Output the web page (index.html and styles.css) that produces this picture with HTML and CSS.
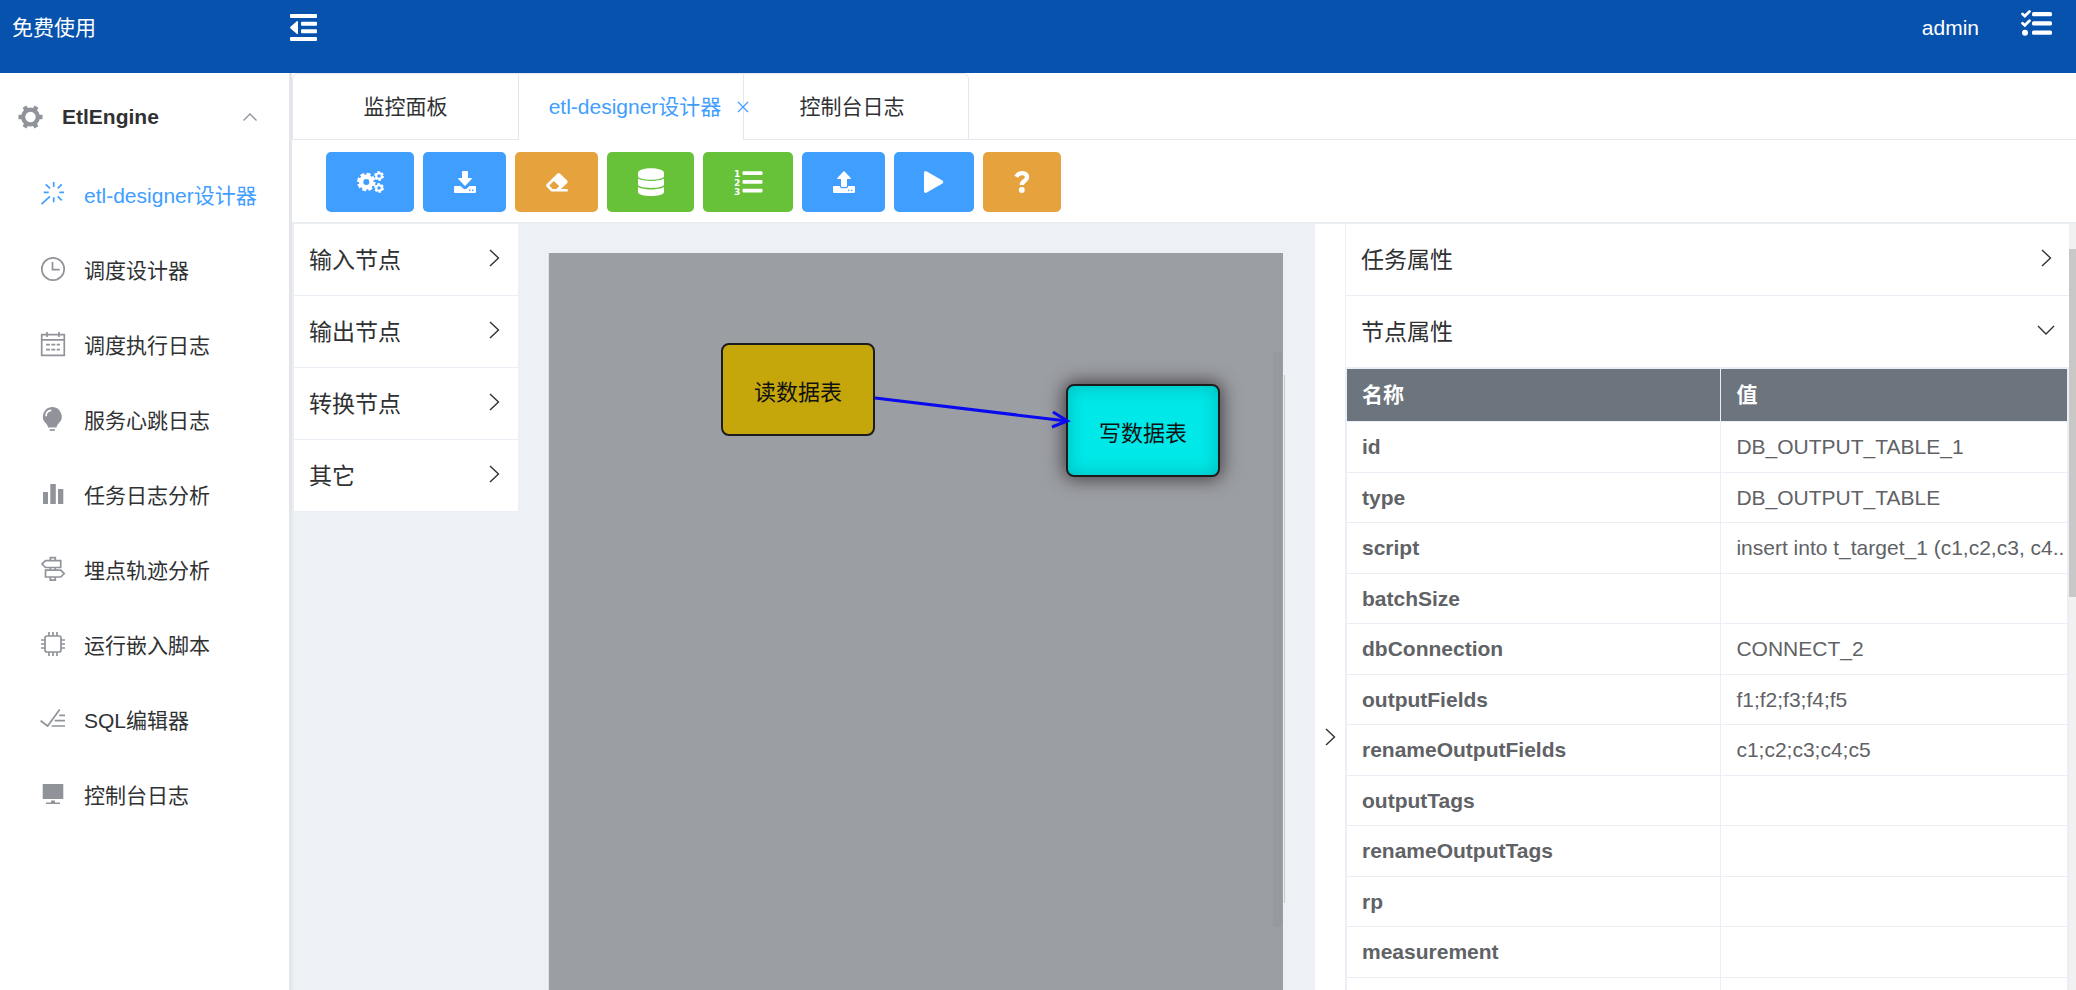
FILE: index.html
```html
<!DOCTYPE html>
<html lang="zh-CN">
<head>
<meta charset="utf-8">
<title>EtlEngine</title>
<link rel="stylesheet" href="styles.css">
</head>
<body>
<div class="app">
  <header class="topbar">
    <span class="brand">免费使用</span>
    <button class="icon-btn" type="button" aria-label="折叠菜单">
      <svg class="fold-icon" viewBox="0 0 27 27" fill="#fff"><rect width="27" height="4" rx="1"/><rect x="11" y="7.7" width="16" height="4" rx="1"/><rect x="11" y="15.3" width="16" height="4" rx="1"/><rect y="23" width="27" height="4" rx="1"/><path d="M8 7.5v12.5L7 20 .2 14.200V13L7 7z"/></svg>
    </button>
    <span class="user">admin</span>
    <button class="icon-btn task-btn" type="button" aria-label="任务列表">
      <svg class="task-icon" viewBox="0 0 31 26"><g fill="#fff"><rect x="11" y="2" width="20" height="4.200" rx="1.500"/><rect x="11" y="11.300" width="20" height="4.200" rx="1.500"/><rect x="11" y="20.600" width="20" height="4.200" rx="1.500"/><circle cx="4" cy="22.700" r="3"/></g><path d="M1.500 4l2.300 2L8.500 1.500M1.500 13.300l2.300 2 4.700-4.500" fill="none" stroke="#fff" stroke-width="2.800" stroke-linecap="round"/></svg>
    </button>
  </header>

  <div class="body">
    <nav class="sidebar">
      <button class="menu-title" type="button">
        <svg class="gear-icon" viewBox="0 0 26 24" fill="none" stroke="#909399"><circle cx="13" cy="12" r="7.600" stroke-width="4.400"/><path d="M5 12H.5M21 12h4.500M9 5.100L6.800 1.200M17 5.100l2.200-3.900M9 18.900l-2.200 3.900M17 18.900l2.200 3.900" stroke-width="4.600"/></svg>
        <span>EtlEngine</span>
        <svg class="fold-arrow" viewBox="0 0 14 8" fill="none" stroke="#909399" stroke-width="1.300"><path d="M.5 7.500L7 1l6.500 6.500"/></svg>
      </button>
      <a class="menu-item active" href="#"><svg viewBox="0 0 24 24"><path d="M12.700 0v5M12.700 15.300v5M2.700 10.300h5M18.300 10.300H23M20.700 2.300l-4 4M16.700 14.300l4 4M4.700 2.300l4.300 4M.5 22.200L9 14.300"/></svg>etl-designer设计器</a>
      <a class="menu-item" href="#"><svg viewBox="0 0 24 24"><circle cx="12" cy="12" r="11.200"/><path d="M11.500 5v7.700h7.200"/></svg>调度设计器</a>
      <a class="menu-item" href="#"><svg viewBox="0 0 24 24"><path d="M.7 2.700h22.600v20.600H.7zM.7 7.800h22.600M6 0v5M18 0v5M5 12.700h4M10.300 12.700h4M15.700 12.700H19M5 17.700h4M10.300 17.700h4M15.700 17.700H19"/></svg>调度执行日志</a>
      <a class="menu-item" href="#"><svg viewBox="0 0 24 24"><path class="solid" d="M11.300 0a9.500 9.500 0 0 1 6.500 16.300c-1.300 1.200-1.800 2.300-2.300 4.200h-8.400c-.5-1.900-1-3-2.300-4.200A9.500 9.500 0 0 1 11.300 0z"/><path d="M8.700 23h5.200"/><path class="shine" d="M5 9.300c0-3.500 2-5.800 5.300-6"/></svg>服务心跳日志</a>
      <a class="menu-item" href="#"><svg viewBox="0 0 24 24"><path class="solid" d="M2 10h5v12H2zM9.300 2h5.500v20H9.300zM17 7h5.300v15H17z"/></svg>任务日志分析</a>
      <a class="menu-item" href="#"><svg viewBox="0 0 24 24"><path d="M9.300 3.700v-3h5v3M4.500 3.700h15.200v6.800H4.500L1 7.100zM9.300 10.500v3M14.300 10.500v3M4.500 13.200h15.300l3.400 3.400-3.400 3.400H4.500zM9.300 20v3.200h5V20"/></svg>埋点轨迹分析</a>
      <a class="menu-item" href="#"><svg viewBox="0 0 24 24"><rect x="4" y="4" width="16" height="16" rx="2"/><path d="M8 0v4M12 0v4M16 0v4M8 20v4M12 20v4M16 20v4M0 8h4M0 12h4M0 16h4M20 8h4M20 12h4M20 16h4"/></svg>运行嵌入脚本</a>
      <a class="menu-item" href="#"><svg viewBox="0 0 24 24"><path d="M-.4 13.800l7 5.200L18.700 2.500M18.300 8.300H24M13.700 13.700H24M10.700 19H24"/></svg>SQL编辑器</a>
      <a class="menu-item" href="#"><svg viewBox="0 0 24 24"><path class="solid" d="M1.700 2h20.600v15H1.700zM10 18.500h4v2h5v1.500H5v-1.500h5z"/></svg>控制台日志</a>
    </nav>

    <main class="content">
      <div class="tabs" role="tablist">
        <button class="tab" type="button" role="tab">监控面板</button>
        <button class="tab current" type="button" role="tab" aria-selected="true">etl-designer设计器</button>
        <button class="tab" type="button" role="tab">控制台日志</button>
        <svg class="tab-close" viewBox="0 0 12 12" fill="none" stroke="#409eff" stroke-width="1.200"><path d="M1 1l10 10M11 1L1 11"/></svg>
      </div>

      <div class="toolbar">
        <button class="tool w88 blue" type="button" aria-label="设置"><svg width="27" height="22" viewBox="0 0 27 22" fill="none" stroke="#fff"><circle cx="9.300" cy="11" r="5.200" stroke-width="4.400"/><circle cx="9.300" cy="11" r="7.900" stroke-width="2.800" stroke-dasharray="4 2.200"/><circle cx="22" cy="5" r="2.800" stroke-width="2"/><circle cx="22" cy="5" r="4" stroke-width="1.800" stroke-dasharray="2.400 1.790"/><circle cx="22" cy="17" r="2.800" stroke-width="2"/><circle cx="22" cy="17" r="4" stroke-width="1.800" stroke-dasharray="2.400 1.790"/></svg></button>
        <button class="tool w83 blue" type="button" aria-label="下载"><svg width="22" height="22" viewBox="0 0 22 22" fill="#fff"><path d="M9 0h4q1 0 1 1v6h3.300q1 0 .4.900L11.600 14.400q-.6.600-1.200 0L4.300 7.900Q3.700 7 4.700 7H8V1q0-1 1-1z"/><path fill-rule="evenodd" d="M1 15h5.500l2.700 2.600q1.800 1.500 3.600 0L15.500 15H21q1 0 1 1v5q0 1-1 1H1q-1 0-1-1v-5q0-1 1-1zM15 18.500v1.400h1.400v-1.400zM18 18.500v1.400h1.400v-1.400z"/></svg></button>
        <button class="tool w83 orange" type="button" aria-label="清除"><svg width="22" height="19" viewBox="0 0 22 19" fill="#fff"><path fill-rule="evenodd" d="M11.500.6q1.200-1.200 2.400 0l7.300 7q1.200 1.200 0 2.400L15 15.900h6.700v2.600H6.300q-.8 0-1.400-.6L.6 13.700q-1.100-1.200 0-2.400zM7.800 7.900L3.300 12.400 6.600 15.900H10.500L13.200 13z"/></svg></button>
        <button class="tool w87 green" type="button" aria-label="数据库"><svg width="26" height="28" viewBox="0 0 26 28" fill="#fff"><path d="M0 5C0-1.300 26-1.300 26 5v3c0 5-26 5-26 0z"/><path d="M0 10.500c4 3.300 22 3.300 26 0v6c0 4.500-26 4.500-26 0z"/><path d="M0 19c4 3.300 22 3.300 26 0v5c0 5.300-26 5.300-26 0z"/></svg></button>
        <button class="tool w90 green" type="button" aria-label="编号列表"><svg width="29" height="26" viewBox="0 0 29 26" fill="#fff"><text class="ol-digit" x="0" y="8">1</text><text class="ol-digit" x="0" y="17">2</text><text class="ol-digit" x="0" y="26">3</text><rect x="8.500" y="2.300" width="20" height="3.700" rx="1"/><rect x="8.500" y="11" width="20" height="3.700" rx="1"/><rect x="8.500" y="19.700" width="20" height="3.700" rx="1"/></svg></button>
        <button class="tool w83 blue" type="button" aria-label="上传"><svg width="22" height="22" viewBox="0 0 22 22" fill="#fff"><path d="M9 16q-1 0-1-1V8H4.700q-1 0-.4-.9L10.400.6q.6-.6 1.200 0l6.100 6.500q.6.900-.4.900H14v7q0 1-1 1z"/><path fill-rule="evenodd" d="M1 15h5.700q.3 2.300 2.300 2.300h4q2 0 2.300-2.300H21q1 0 1 1v5q0 1-1 1H1q-1 0-1-1v-5q0-1 1-1zM15 18.700v1.200h1.300v-1.200zM18 18.700v1.200h1.300v-1.200z"/></svg></button>
        <button class="tool w80 blue" type="button" aria-label="运行"><svg width="20" height="22" viewBox="0 0 20 22" fill="#fff"><path d="M0 2Q.2-.7 2.800.4L18.500 9.400q1.800 1.600 0 3.200L2.800 21.600Q.2 22.700 0 20z"/></svg></button>
        <button class="tool w78 orange" type="button" aria-label="帮助"><svg width="16" height="22" viewBox="0 0 16 22"><path d="M2.200 5.700C5 .8 13 1 13 6.200c0 4-5.200 3.800-5.200 7.800" fill="none" stroke="#fff" stroke-width="4.300"/><circle cx="7.800" cy="19" r="2.900" fill="#fff"/></svg></button>
      </div>

      <div class="workspace">
        <aside class="palette">
          <button class="fold" type="button">输入节点<svg class="chev" viewBox="0 0 18 18"><path d="M5 1l8.500 8L5 17"/></svg></button>
          <button class="fold" type="button">输出节点<svg class="chev" viewBox="0 0 18 18"><path d="M5 1l8.500 8L5 17"/></svg></button>
          <button class="fold" type="button">转换节点<svg class="chev" viewBox="0 0 18 18"><path d="M5 1l8.500 8L5 17"/></svg></button>
          <button class="fold" type="button">其它<svg class="chev" viewBox="0 0 18 18"><path d="M5 1l8.500 8L5 17"/></svg></button>
        </aside>

        <section class="stage">
          <div class="canvas">
            <div class="node node-read">读数据表</div>
            <div class="node node-write">写数据表</div>
            <svg class="edge" width="196" height="40" viewBox="0 0 196 40" fill="none" stroke="#0a0aee"><path d="M0 6L192 29" stroke-width="3"/><path d="M178 20l14.500 9L177 35" stroke-width="3"/></svg>
            <div class="canvas-thumb"></div>
            <div class="canvas-line"></div>
          </div>
        </section>

        <button class="splitter" type="button" aria-label="收起属性"><svg class="chev" viewBox="0 0 18 18"><path d="M5 1l8.500 8L5 17"/></svg></button>

        <aside class="props">
          <div class="props-body">
            <button class="fold" type="button">任务属性<svg class="chev" viewBox="0 0 18 18"><path d="M5 1l8.500 8L5 17"/></svg></button>
            <button class="fold" type="button" aria-expanded="true">节点属性<svg class="chev" viewBox="0 0 18 18"><path d="M1 5l8 8 8-8"/></svg></button>
            <table class="prop-table">
              <thead><tr><th class="col-name">名称</th><th>值</th></tr></thead>
              <tbody>
                <tr><th>id</th><td>DB_OUTPUT_TABLE_1</td></tr>
                <tr><th>type</th><td>DB_OUTPUT_TABLE</td></tr>
                <tr><th>script</th><td>insert into t_target_1 (c1,c2,c3, c4..</td></tr>
                <tr><th>batchSize</th><td></td></tr>
                <tr><th>dbConnection</th><td>CONNECT_2</td></tr>
                <tr><th>outputFields</th><td>f1;f2;f3;f4;f5</td></tr>
                <tr><th>renameOutputFields</th><td>c1;c2;c3;c4;c5</td></tr>
                <tr><th>outputTags</th><td></td></tr>
                <tr><th>renameOutputTags</th><td></td></tr>
                <tr><th>rp</th><td></td></tr>
                <tr><th>measurement</th><td></td></tr>
                <tr><th></th><td></td></tr>
              </tbody>
            </table>
          </div>
          <div class="scroll-track"><div class="scroll-thumb"></div></div>
        </aside>
      </div>
    </main>
  </div>
</div>
</body>
</html>
```
FILE: styles.css
```css
* { box-sizing: border-box; }
body {
  margin: 0;
  font-family: "Liberation Sans", "Noto Sans CJK SC", sans-serif;
  font-size: 21px;
  color: #303133;
  background: #fff;
}
button {
  margin: 0;
  padding: 0;
  border: 0;
  background: none;
  font: inherit;
  color: inherit;
  text-align: left;
}
svg { display: block; flex: none; overflow: visible; }
.app { display: flex; flex-direction: column; height: 100vh; overflow: hidden; }

.topbar {
  display: flex;
  align-items: flex-start;
  flex: none;
  height: 73px;
  padding: 14px 24px 0 12px;
  background: #0652ad;
  color: #fff;
  line-height: 28px;
}
.brand { width: 278px; }
.fold-icon { width: 27px; height: 27px; }
.user { margin-left: auto; margin-right: 42px; }
.task-btn { margin-top: -4px; }
.task-icon { width: 31px; height: 26px; }

.body { display: flex; flex: 1; min-height: 0; }

.sidebar {
  flex: none;
  width: 292px;
  border-right: 3px solid #e4e5eb;
}
.menu-title {
  display: flex;
  align-items: center;
  width: 100%;
  height: 84px;
  padding: 3px 32px 0 18px;
  font-weight: bold;
}
.gear-icon { width: 25px; height: 24px; margin-right: 19px; }
.fold-arrow { width: 14px; height: 8px; margin-left: auto; }
.menu-item {
  display: flex;
  align-items: center;
  gap: 19px;
  height: 75px;
  padding: 0 0 2px 41px;
  color: #303133;
  text-decoration: none;
}
.menu-item svg {
  width: 24px;
  height: 24px;
  fill: none;
  stroke: #909399;
  stroke-width: 1.700;
}
.menu-item .solid { fill: #909399; stroke: none; }
.menu-item .shine { stroke: #fff; }
.menu-item.active { color: #409eff; }
.menu-item.active svg { stroke: #409eff; }

.content { display: flex; flex-direction: column; flex: 1; min-width: 0; }

.tabs { position: relative; display: flex; flex: none; height: 67px; border-bottom: 1px solid #e4e7ed; }
.tab {
  width: 225px;
  height: 66px;
  padding-bottom: 4px;
  border-top: 1px solid #e4e7ed;
  border-right: 1px solid #e4e7ed;
  text-align: center;
}
.tab:first-child { width: 227px; border-left: 1px solid #e4e7ed; border-top-left-radius: 6px; }
.tab:nth-child(3) { border-top-right-radius: 6px; padding-right: 8px; }
.tab.current { height: 67px; padding-left: 8px; background: #fff; color: #409eff; }
.tab-close { position: absolute; left: 445px; top: 28px; width: 12px; height: 12px; }

.toolbar {
  display: flex;
  flex: none;
  gap: 9px;
  padding: 12px 34px 10px;
  border-bottom: 2px solid #ebeef0;
}
.tool {
  display: flex;
  align-items: center;
  justify-content: center;
  height: 60px;
  border-radius: 5px;
}
.w78 { width: 78px; }
.w80 { width: 80px; }
.w83 { width: 83px; }
.w87 { width: 87px; }
.w88 { width: 88px; }
.w90 { width: 90px; }
.blue { background: #409eff; }
.orange { background: #e6a23c; }
.green { background: #67c23a; }
.ol-digit { font: bold 9px "DejaVu Sans", sans-serif; }

.workspace {
  display: grid;
  grid-template-columns: 226px minmax(0, 797fr) 30px minmax(0, 731fr);
  grid-template-rows: minmax(0, 1fr);
  flex: 1;
  min-height: 0;
}

.palette { border-left: 2px solid #ebeef0; background: #edf0f5; }
.fold {
  display: flex;
  align-items: center;
  justify-content: space-between;
  width: 100%;
  height: 72px;
  padding: 0 15px 4px;
  border-bottom: 1px solid #ebeef5;
  background: #fff;
  font-size: 23px;
}
.chev { width: 18px; height: 18px; fill: none; stroke: #303133; stroke-width: 1.400; }

.stage { padding: 29px 32px 0 30px; background: #edf0f5; }
.canvas {
  position: relative;
  height: 100%;
  border-left: 1px solid #e0e2e6;
  background: #9b9ea3;
}
.node {
  position: absolute;
  display: flex;
  align-items: center;
  justify-content: center;
  width: 154px;
  height: 93px;
  border: 2px solid #1c1c1c;
  border-radius: 8px;
  color: #111;
  font-size: 22px;
}
.node-read { left: 172px; top: 90px; background: #c6a70b; }
.node-write {
  left: 517px;
  top: 131px;
  background: #00e8e8;
  box-shadow: 0 0 18px 2px rgba(30, 20, 25, 0.7), inset 0 0 16px 2px rgba(0, 120, 120, 0.35);
}
.edge { position: absolute; left: 326px; top: 139px; }
.canvas-thumb {
  position: absolute;
  right: 1px;
  top: 99px;
  width: 9px;
  height: 575px;
  border-radius: 4px;
  background: #96999d;
}
.canvas-line { position: absolute; right: -2px; top: 122px; width: 1px; height: 528px; background: #c8c8c8; }

.splitter {
  display: flex;
  align-items: center;
  justify-content: center;
  padding-top: 260px;
  background: #fff;
}

.props { display: flex; overflow: hidden; border-left: 1px solid #ebeef5; }
.props-body { flex: 1; min-width: 0; }
.props .fold { padding-right: 14px; }
.prop-table {
  width: 100%;
  table-layout: fixed;
  border-collapse: separate;
  border-spacing: 0;
  border: solid #ebeef5;
  border-width: 1px 2px 0 1px;
  color: #606266;
}
.prop-table th,
.prop-table td {
  height: 50px;
  padding: 0 0 0 15px;
  border-bottom: 1px solid #ebeef5;
  overflow: hidden;
  text-align: left;
  text-overflow: ellipsis;
  white-space: nowrap;
  line-height: 24px;
}
.prop-table tr th:first-child { border-right: 1px solid #ebeef5; }
.prop-table .col-name { width: 52%; }
.prop-table tbody tr:nth-child(odd) > * { height: 51px; }
.prop-table thead th { height: 53px; background: #6c757d; color: #fff; }

.scroll-track { flex: none; width: 7px; padding-top: 25px; background: #f1f1f1; }
.scroll-thumb { height: 348px; background: #c8c8c8; }
```
